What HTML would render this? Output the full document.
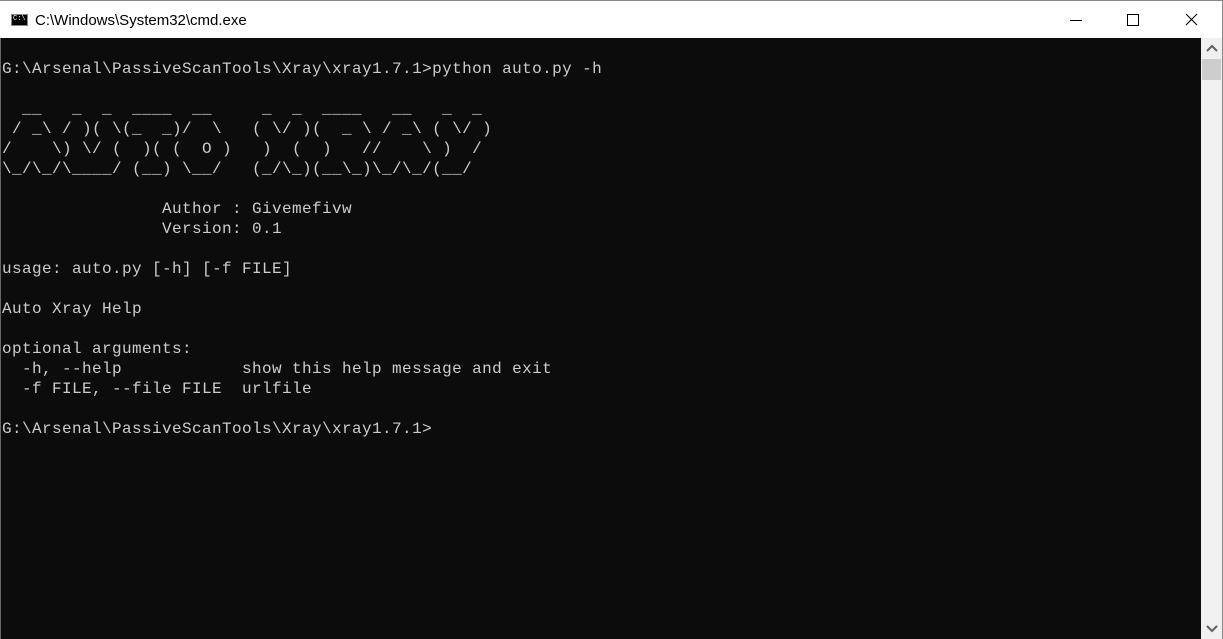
<!DOCTYPE html>
<html><head><meta charset="utf-8"><style>
*{margin:0;padding:0;box-sizing:border-box}
html,body{width:1223px;height:639px;overflow:hidden;background:#0c0c0c}
.title{position:absolute;left:0;top:0;width:1223px;height:38px;background:#fff;border-right:1px solid #888;border-top:1px solid #888}
.title .t{position:absolute;left:35px;top:11px;font:15px "Liberation Sans",sans-serif;color:#000}
.icon{position:absolute;left:11px;top:13px;width:17px;height:12px;background:#000;border:1px solid #888}
.icon span{position:absolute;left:1px;top:1px;font:7px "Liberation Mono",monospace;color:#fff;line-height:7px}
.term{position:absolute;left:0;top:38px;width:1201px;height:601px;background:#0c0c0c;border-left:1px solid #666}
pre{position:absolute;left:1px;top:21px;font-family:"Liberation Mono",monospace;font-size:16px;letter-spacing:0.4px;line-height:20px;color:#cccccc;white-space:pre}
.sb{position:absolute;left:1201px;top:38px;width:22px;height:601px;background:#f0f0f0;border-right:1px solid #888}
.thumb{position:absolute;left:1px;top:21px;width:19px;height:21px;background:#cdcdcd}
</style></head><body>
<div class="title">
<div class="icon"><span>C:\</span></div>
<div class="t">C:\Windows\System32\cmd.exe</div>
<svg style="position:absolute;left:1060px;top:10px" width="160" height="20">
<line x1="10" y1="9.5" x2="22" y2="9.5" stroke="#000" stroke-width="1"/>
<rect x="67.5" y="3.5" width="11" height="11" fill="none" stroke="#000" stroke-width="1"/>
<line x1="126" y1="3" x2="137" y2="14" stroke="#000" stroke-width="1.1"/>
<line x1="137" y1="3" x2="126" y2="14" stroke="#000" stroke-width="1.1"/>
</svg>
</div>
<div class="term"><pre>G:\Arsenal\PassiveScanTools\Xray\xray1.7.1&gt;python auto.py -h

  __   _  _  ____  __     _  _  ____   __   _  _
 / _\ / )( \(_  _)/  \   ( \/ )(  _ \ / _\ ( \/ )
/    \) \/ (  )( (  O )   )  (  )   //    \ )  /
\_/\_/\____/ (__) \__/   (_/\_)(__\_)\_/\_/(__/

                Author : Givemefivw
                Version: 0.1

usage: auto.py [-h] [-f FILE]

Auto Xray Help

optional arguments:
  -h, --help            show this help message and exit
  -f FILE, --file FILE  urlfile

G:\Arsenal\PassiveScanTools\Xray\xray1.7.1&gt;</pre></div>
<div class="sb">
<svg style="position:absolute;left:0;top:0" width="22" height="601">
<polyline points="6,13 11,8 16,13" fill="none" stroke="#606060" stroke-width="2"/>
<polyline points="6,588 11,593 16,588" fill="none" stroke="#606060" stroke-width="2"/>
</svg>
<div class="thumb"></div>
</div>
</body></html>
